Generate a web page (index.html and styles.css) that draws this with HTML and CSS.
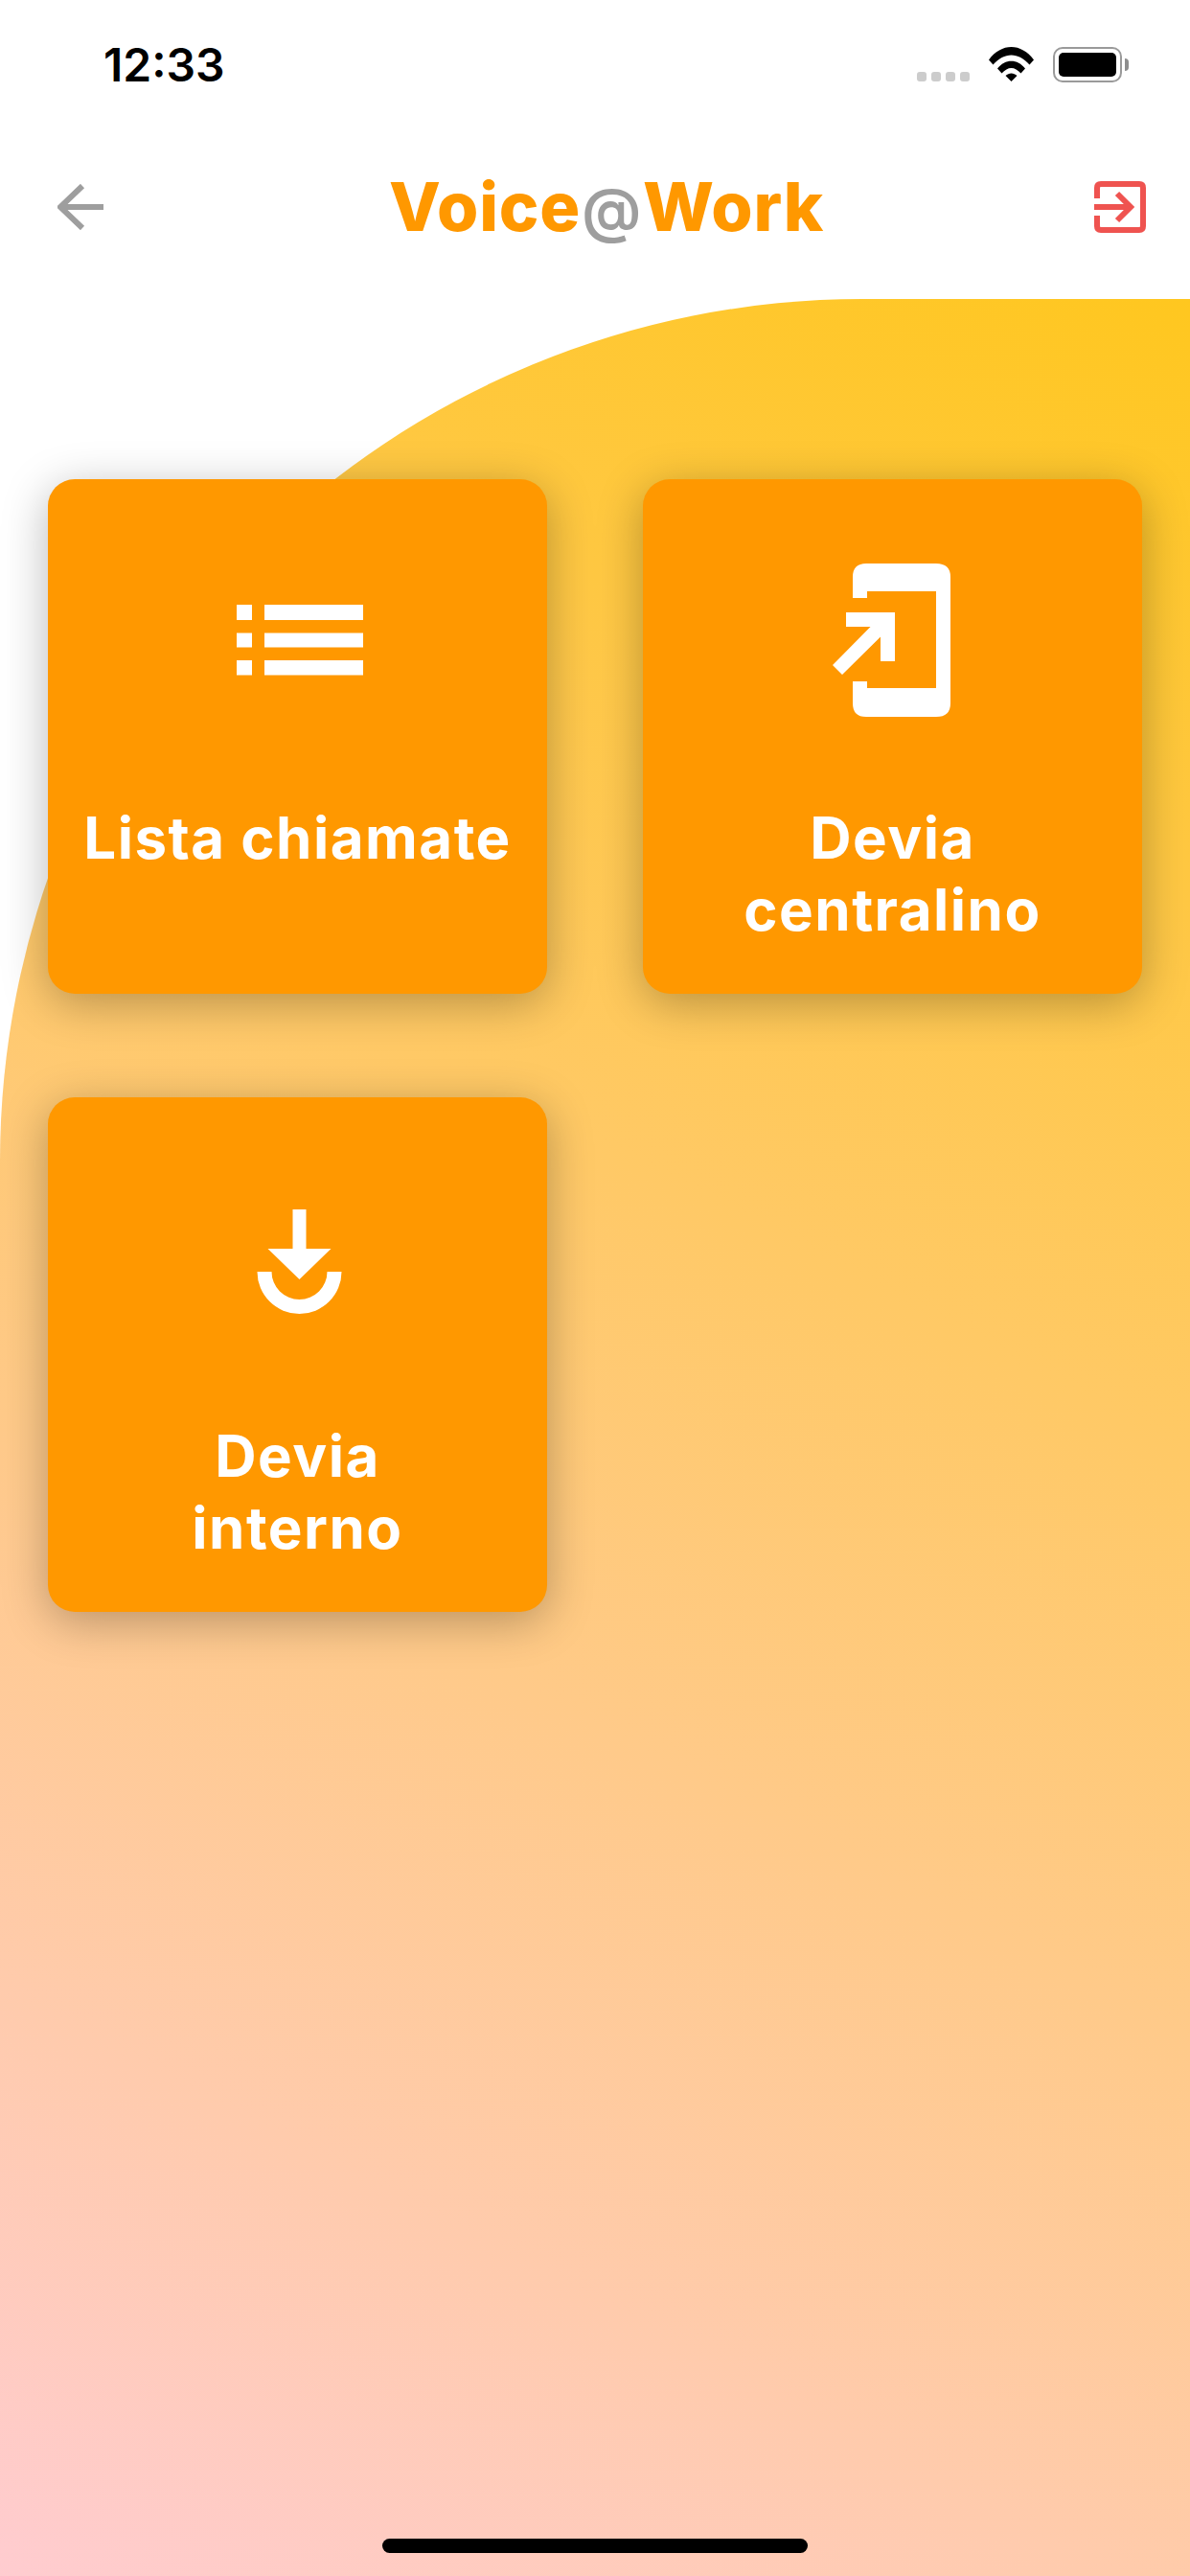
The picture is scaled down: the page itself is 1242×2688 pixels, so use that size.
FILE: index.html
```html
<!DOCTYPE html>
<html lang="en">
<head>
    <meta charset="UTF-8">
    <meta name="viewport" content="width=device-width, initial-scale=1.0">
    <title>Voice@Work</title>
    <link rel="stylesheet" href="styles.css">
</head>
<body>
    <div class="screen">
        <div class="status-bar">
            <span class="time">12:33</span>
            <div class="status-icons">
                <div class="signal">
                    <span></span><span></span><span></span><span></span>
                </div>
                <svg class="wifi" width="47" height="36" viewBox="0 0 47 36">
                    <path d="M0 13.5 C13 -4.5 34 -4.5 47 13.5 L42.5 18.5 C31 5 16 5 4.5 18.5 Z" fill="#000"/>
                    <path d="M9 22.5 C17 12 30 12 38 22.5 L33.5 27.5 C27 20 20 20 13.5 27.5 Z" fill="#000"/>
                    <path d="M17.5 30 C21 26.5 26 26.5 29.5 30 L23.5 36 Z" fill="#000"/>
                </svg>
                <div class="battery">
                    <div class="battery-level"></div>
                </div>
                <div class="battery-nub"></div>
            </div>
        </div>

        <div class="app-bar">
            <svg class="back-icon" width="48" height="48" viewBox="0 0 48 48">
                <path d="M48 24 H4 M26 2 L3 24 L26 46" fill="none" stroke="#9e9e9e" stroke-width="6"/>
            </svg>
            <h1 class="app-title">Voice<span class="at">@</span>Work</h1>
            <svg class="logout-icon" width="54" height="54" viewBox="0 0 54 54">
                <path d="M3 18 V7 Q3 3 7 3 H47 Q51 3 51 7 V47 Q51 51 47 51 H7 Q3 51 3 47 V36" fill="none" stroke="#ef5350" stroke-width="6"/>
                <path d="M0 27 H38 M24 13 L38 27 L24 41" fill="none" stroke="#ef5350" stroke-width="6"/>
            </svg>
        </div>

        <div class="panel">
            <div class="menu-grid">
                <div class="menu-card">
                    <svg class="card-icon" width="180" height="180" viewBox="0 0 180 180">
                        <path d="M26 53 H42 V69 H26 Z M26 82.5 H42 V97.5 H26 Z M26 111 H42 V126.5 H26 Z M55 53 H158 V69 H55 Z M55 82.5 H158 V97.5 H55 Z M55 111 H158 V126.5 H55 Z" fill="#fff"/>
                    </svg>
                    <span class="card-label">Lista chiamate</span>
                </div>
                <div class="menu-card">
                    <svg class="card-icon" width="180" height="180" viewBox="0 0 180 180">
                        <path d="M48 46 V24 Q48 10 62 10 H135 Q150 10 150 24 V156 Q150 170 135 170 H62 Q48 170 48 156 V133 H63 V140 H135 V39 H63 V46 Z" fill="#fff"/>
                        <path d="M41 61 H92 V112 H77 V86.5 L37 126 L27 116 L66.5 76 H41 Z" fill="#fff"/>
                    </svg>
                    <span class="card-label">Devia<br>centralino</span>
                </div>
                <div class="menu-card">
                    <svg class="card-icon" width="180" height="180" viewBox="0 0 180 180">
                        <path d="M84.5 39 H98.5 V80 H124.5 L91.5 112 L58.5 80 H84.5 Z" fill="#fff"/>
                        <path d="M47.5 104 H62.5 A29 29 0 0 0 120.5 104 H135.5 A44 44 0 0 1 47.5 104 Z" fill="#fff"/>
                    </svg>
                    <span class="card-label">Devia<br>interno</span>
                </div>
            </div>
        </div>

        <div class="home-indicator"></div>
    </div>
</body>
</html>
```

FILE: styles.css
```css
* {
    box-sizing: border-box;
}

body {
    margin: 0;
    background: #fff;
    font-family: 'Inter', 'Liberation Sans', sans-serif;
}

.screen {
    position: relative;
    display: flex;
    flex-direction: column;
    width: 1242px;
    height: 2688px;
    overflow: hidden;
}

/* Status bar */
.status-bar {
    display: flex;
    justify-content: space-between;
    align-items: flex-start;
    height: 102px;
    padding: 49px 64px 0 108px;
}

.time {
    font-size: 48px;
    font-weight: 600;
    line-height: 37px;
    color: #000;
}

.status-icons {
    display: flex;
    align-items: flex-start;
}

.signal {
    display: flex;
    gap: 5px;
    margin: 26px 20px 0 0;
}

.signal span {
    width: 10px;
    height: 10px;
    border-radius: 3px;
    background: #ccc;
}

.wifi {
    margin-right: 20px;
}

.battery {
    width: 72px;
    height: 37px;
    padding: 4px;
    border: 2px solid #9a9a9a;
    border-radius: 10px;
}

.battery-level {
    height: 100%;
    border-radius: 5px;
    background: #000;
}

.battery-nub {
    width: 4px;
    height: 13px;
    margin: 12px 0 0 3px;
    border-radius: 0 4px 4px 0;
    background: #8e8e8e;
}

/* App bar */
.app-bar {
    display: flex;
    justify-content: space-between;
    align-items: center;
    height: 210px;
    padding: 17px 46px 0 60px;
}

.back-icon {
    flex: none;
}

.logout-icon {
    flex: none;
}

.app-title {
    margin: 4px 0 0 16px;
    font-size: 70px;
    font-weight: 800;
    line-height: 80px;
    letter-spacing: 0.8px;
    color: #ff9800;
}

.at {
    margin: 0 1px;
    font-size: 62px;
    font-weight: 600;
    color: #9e9e9e;
}

/* Panel with the big curved corner */
.panel {
    flex: 1;
    padding: 188px 50px 0;
    border-top-left-radius: 900px;
    background: linear-gradient(207.6deg, #ffc71f 0%, #ffccd0 100%);
}

.menu-grid {
    display: grid;
    grid-template-columns: 521px 521px;
    grid-auto-rows: 537px;
    column-gap: 100px;
    row-gap: 108px;
}

.menu-card {
    display: flex;
    flex-direction: column;
    align-items: center;
    padding: 78px 30px 0;
    border-radius: 28px;
    background: #ff9800;
    box-shadow: 0 10px 48px rgba(0, 0, 0, 0.28);
    text-align: center;
}

.card-icon {
    flex: none;
    margin-bottom: 79px;
}

.card-label {
    font-size: 60px;
    font-weight: 750;
    line-height: 75px;
    letter-spacing: 1.5px;
    color: #fff;
}

.home-indicator {
    position: absolute;
    left: 399px;
    bottom: 24px;
    width: 444px;
    height: 15px;
    border-radius: 8px;
    background: #000;
}
```
